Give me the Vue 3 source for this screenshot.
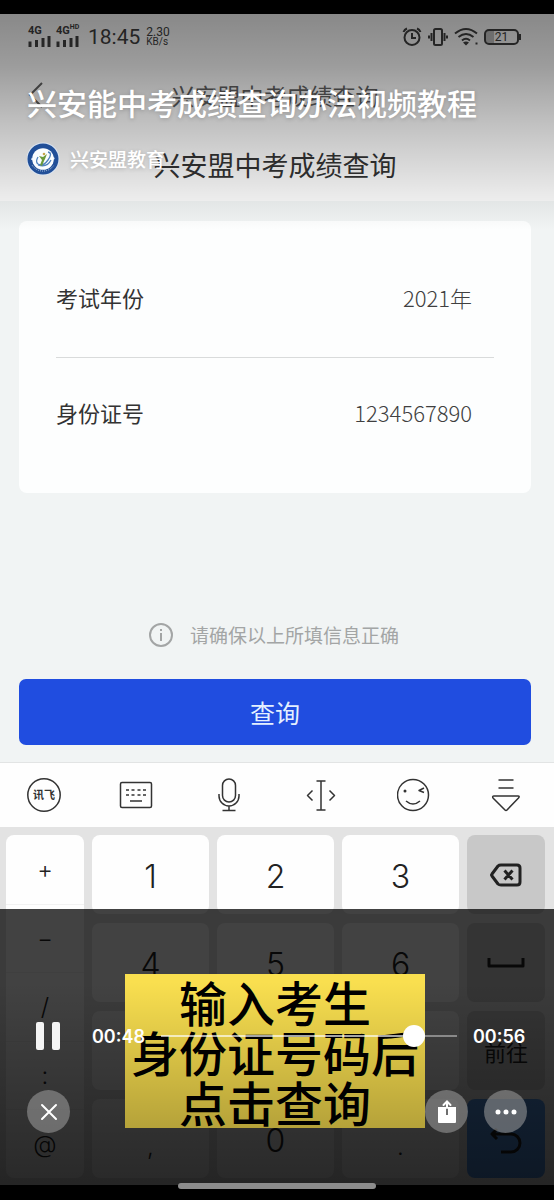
<script setup>
import { ref } from "vue";

const examYear = ref("2021年");
const idNumber = ref("1234567890");
const position = ref(49.5);

const symbols = ["+", "−", "/", ":", "@"];

// the middle of the third row stays blank behind the caption
const keys = [
  { label: "1" },
  { label: "2" },
  { label: "3" },
  { icon: "delete" },
  { label: "4" },
  { label: "5" },
  { label: "6" },
  { icon: "space" },
  { label: "" },
  { label: "" },
  { label: "" },
  { label: "前往", kind: "go" },
  { label: ",", kind: "mark" },
  { label: "0" },
  { label: ".", kind: "mark" },
  { icon: "enter" },
];

const captionLines = ["输入考生", "身份证号码后", "点击查询"];
</script>

<template>
  <main class="player">
    <section class="video">
      <div class="phone-head">
        <div class="status-bar">
          <div class="signal">
            <span>4G</span>
            <svg width="24" height="11" viewBox="0 0 24 11">
              <path d="M2 5.500V11M8.500 4V11M15 2V11M21 0V11" />
            </svg>
          </div>
          <div class="signal">
            <span>4G<sup>HD</sup></span>
            <svg width="24" height="11" viewBox="0 0 24 11">
              <path d="M2 5.500V11M8.500 4V11M15 2V11M21 0V11" />
            </svg>
          </div>
          <span class="clock">18:45</span>
          <span class="speed">2.30<small>KB/s</small></span>
          <div class="status-icons">
            <svg width="20" height="20" viewBox="0 0 20 20">
              <circle cx="10" cy="10.500" r="7.500" />
              <path d="M10 6v5h4M1.500 5Q2.500 2.500 5 1.500M18.500 5Q17.500 2.500 15 1.500" />
            </svg>
            <svg width="20" height="20" viewBox="0 0 20 20">
              <rect x="6" y="2" width="8" height="16" rx="1.500" />
              <path d="M3.500 6v8M1 8.500v3M16.500 6v8M19 8.500v3" />
            </svg>
            <svg width="24" height="20" viewBox="0 0 24 20">
              <path d="M1 6.500Q12-2.500 23 6.500M4.500 10Q12 4 19.500 10M8 13.500Q12 10 16 13.500" />
              <path class="solid" d="M9 15.500Q12 13.500 15 15.500L12 18.500ZM21.500 15.500h2v2h-2Z" />
            </svg>
            <span class="battery">21</span>
          </div>
        </div>

        <div class="nav-bar">
          <svg class="back" width="16" height="26" viewBox="0 0 16 26">
            <path d="M14 1L2 13L14 25" />
          </svg>
          <span>兴安盟中考成绩查询</span>
        </div>
        <h2>兴安盟中考成绩查询</h2>
      </div>

      <form class="query" @submit.prevent>
        <div class="card">
          <div class="field">
            <label for="exam-year">考试年份</label>
            <input id="exam-year" v-model="examYear" type="text" />
          </div>
          <div class="field">
            <label for="id-number">身份证号</label>
            <input id="id-number" v-model="idNumber" type="text" />
          </div>
        </div>

        <p class="notice">
          <svg width="24" height="24" viewBox="0 0 24 24">
            <circle cx="12" cy="12" r="11" />
            <path d="M12 10v8M12 6v2" />
          </svg>
          请确保以上所填信息正确
        </p>
        <button class="submit" type="submit">查询</button>
      </form>

      <div class="toolbar">
        <svg viewBox="0 0 34 34">
          <circle cx="17" cy="17" r="16.200" />
          <text x="17" y="21" text-anchor="middle">讯飞</text>
        </svg>
        <svg viewBox="0 0 34 34">
          <rect x="1.500" y="4.500" width="31" height="25" rx="1.500" />
          <path d="M7 12h3M12.500 12h3M18.500 12h3M24 12h3M7 17h3M12.500 17h3M18.500 17h3M24 17h3M11 23h12" />
        </svg>
        <svg viewBox="0 0 34 34">
          <rect x="10.500" y="1" width="13" height="23" rx="6.500" />
          <path d="M7 16v2a10 10 0 0 0 20 0v-2M17 28v5M10.500 32.500h13" />
        </svg>
        <svg viewBox="0 0 34 34">
          <path d="M12.500 3h9M17 3v29M12.500 32h9M8.500 12.500l-5 5l5 5M25.500 12.500l5 5l-5 5" />
        </svg>
        <svg viewBox="0 0 34 34">
          <circle cx="16" cy="17" r="15.500" />
          <path d="M9 23Q16 29 23 23M27 10l-5 2.500l5 2" />
          <circle class="eye" cx="8" cy="13" r="1.500" />
        </svg>
        <svg viewBox="0 0 34 34">
          <path d="M9.500 2h15M9.500 10h15M5 18h24q2 0 .5 2L18 32q-1 1-2 0L4 20q-1-2 1-2Z" />
        </svg>
      </div>

      <div class="keypad">
        <div class="keys">
          <div class="symbols">
            <button v-for="symbol in symbols" :key="symbol" type="button">{{ symbol }}</button>
          </div>
          <button
            v-for="(key, index) in keys"
            :key="index"
            class="key"
            :class="[key.kind, key.icon]"
            type="button"
            :aria-label="key.icon"
          >
            <svg v-if="key.icon === 'delete'" width="32" height="24" viewBox="0 0 32 24">
              <path d="M11 2H27q3 0 3 3V19q0 3-3 3H11q-2 0-3-1L2 13q-1-1 0-2L8 3q1-1 3-1ZM14.500 7.500l8 9M22.500 7.500l-8 9" />
            </svg>
            <svg v-else-if="key.icon === 'space'" width="38" height="12" viewBox="0 0 38 12">
              <path d="M2 1v8h34V1" />
            </svg>
            <svg v-else-if="key.icon === 'enter'" width="34" height="28" viewBox="0 0 34 28">
              <path d="M8 2L3 7l5 5M3 7H22a9 9 0 0 1 0 18H12" />
            </svg>
            <template v-else>{{ key.label }}</template>
          </button>
        </div>
        <div class="dim"></div>
        <p class="caption">
          <span v-for="line in captionLines" :key="line">{{ line }}</span>
        </p>
      </div>
    </section>

    <header class="top-overlay">
      <h1>兴安能中考成绩查询办法视频教程</h1>
      <div class="author">
        <svg width="34" height="34" viewBox="0 0 34 34">
          <circle cx="16" cy="17" r="16.500" fill="#dbe5f2" />
          <circle cx="16" cy="17" r="15.500" fill="#214f98" />
          <path d="M5 18A11.500 13 0 0 1 27 18" fill="none" stroke="#dce8f6" stroke-width="2" stroke-dasharray="2 2" />
          <path d="M5 23A13 13 0 0 0 27 23" fill="none" stroke="#b9cce5" stroke-width="1" stroke-dasharray="1 1" />
          <circle cx="16" cy="17" r="10.800" fill="#fafdff" />
          <path d="M21 10Q26 11 21 18T11 22Q8 20 11 15M11 23Q20 26 24 18" fill="none" stroke="#5082bd" stroke-width="1.300" />
          <path d="M12 14l4 1l4-3l-2 5l-1 2l-2 5l-2-1l2-5Z" fill="#6b9a3b" />
          <circle cx="17" cy="12" r="1.300" fill="#c7a44b" />
        </svg>
        <span>兴安盟教育</span>
      </div>
    </header>

    <footer class="bottom-overlay">
      <div class="progress">
        <button class="pause" type="button" aria-label="pause"></button>
        <span class="time">00:48</span>
        <input v-model="position" type="range" min="0" max="56" step="0.1" aria-label="progress" />
        <span class="time">00:56</span>
      </div>
      <div class="actions">
        <button class="round" type="button" aria-label="close">
          <svg width="20" height="20" viewBox="0 0 20 20">
            <path d="M3 3l14 14M17 3L3 17" />
          </svg>
        </button>
        <button class="round share" type="button" aria-label="share">
          <svg width="20" height="24" viewBox="0 0 20 24">
            <path class="fill" d="M1 7H9V15H11V7H19V22q0 1-1 1H2q-1 0-1-1Z" />
            <path d="M10 8V2M6.500 5L10 1.500L13.500 5" />
          </svg>
        </button>
        <button class="round" type="button" aria-label="more">
          <svg width="22" height="6" viewBox="0 0 22 6">
            <path class="fill" d="M.5 3a2.500 2.500 0 1 0 5 0a2.500 2.500 0 1 0-5 0M8.500 3a2.500 2.500 0 1 0 5 0a2.500 2.500 0 1 0-5 0M16.500 3a2.500 2.500 0 1 0 5 0a2.500 2.500 0 1 0-5 0" />
          </svg>
        </button>
      </div>
    </footer>
    <div class="home-indicator"></div>
  </main>
</template>

<style>
body {
  margin: 0;
  background: #000000;
}
</style>

<style scoped>
* {
  box-sizing: border-box;
}

.player {
  position: relative;
  padding: 14px 0 15px;
  background: #000000;
  color: #333333;
  font-family: "Noto Sans CJK SC", sans-serif;
}

h1,
h2,
p {
  margin: 0;
}

button {
  padding: 0;
  border: none;
  background: none;
  color: inherit;
  font: inherit;
}

svg {
  display: block;
  flex: none;
  fill: none;
  stroke: currentColor;
}

.video {
  background: #f1f4f4;
}

.phone-head {
  background: #fcfcfc;
}

.status-bar {
  display: flex;
  align-items: center;
  height: 45px;
  padding: 0 35px 0 28px;
  color: #404040;
  font-family: Roboto, sans-serif;
}

.signal {
  width: 28px;
  font-size: 11px;
  font-weight: 700;
  line-height: 10px;
  white-space: nowrap;
}

.signal sup {
  font-size: 7px;
  line-height: 0;
}

.signal svg {
  stroke-width: 3;
}

.clock {
  margin-left: 4px;
  font-size: 21px;
}

.speed {
  margin-left: 6px;
  font-size: 12px;
  line-height: 10px;
}

.speed small {
  display: block;
  font-size: 10px;
}

.status-icons {
  display: flex;
  align-items: center;
  gap: 6px;
  margin-left: auto;
}

.status-icons svg {
  stroke-width: 2;
}

.solid {
  fill: currentColor;
  stroke: none;
}

.battery {
  position: relative;
  width: 35px;
  border: 2px solid #404040;
  border-radius: 5px;
  background: linear-gradient(90deg, #c0c0c0 8px, transparent 8px);
  font-size: 12px;
  line-height: 12px;
  text-align: center;
}

.battery::after {
  content: "";
  position: absolute;
  top: 3px;
  right: -4px;
  width: 2px;
  height: 6px;
  background: #404040;
}

.nav-bar {
  display: grid;
  grid-template-columns: 1fr auto 1fr;
  align-items: center;
  height: 72px;
  padding: 0 32px 0 28px;
  color: #606060;
  font-size: 23px;
}

.back {
  stroke-width: 2;
}

h2 {
  padding: 16px 4px 18px 0;
  font-size: 27px;
  font-weight: 400;
  line-height: 36px;
  text-align: center;
}

.query {
  display: grid;
  padding: 20px 23px 17px 19px;
}

.card {
  min-height: 272px;
  padding: 21px 37px;
  border-radius: 8px;
  background: #fdfefe;
}

.field {
  display: flex;
  align-items: center;
  justify-content: space-between;
  height: 115px;
  padding: 0 22px 6px 0;
  font-size: 22px;
}

.field + .field {
  border-top: 1px solid #d9dbdb;
}

.field input {
  width: 200px;
  padding: 0;
  border: none;
  outline: none;
  background: none;
  color: #404040;
  font: inherit;
  font-weight: 300;
  text-align: right;
}

.notice {
  display: flex;
  align-items: center;
  justify-content: center;
  gap: 17px;
  margin-top: 128px;
  padding-right: 2px;
  color: #a3a5a5;
  font-size: 19px;
  line-height: 28px;
}

.notice svg {
  stroke-width: 2;
}

.submit {
  height: 66px;
  margin-top: 30px;
  border-radius: 7px;
  background: #204de0;
  color: #e4f0ff;
  font-size: 25px;
}

.toolbar {
  display: flex;
  align-items: center;
  justify-content: space-between;
  height: 65px;
  padding: 0 31px 0 27px;
  border-top: 1px solid #e2e4e4;
  background: #fefefe;
}

.toolbar svg {
  width: 34px;
  height: 34px;
  stroke-width: 1.5;
  stroke-linejoin: round;
}

.toolbar text {
  fill: #333333;
  stroke: none;
  font-size: 11px;
  font-weight: 700;
}

.toolbar .eye {
  fill: currentColor;
  stroke: none;
}

.keypad {
  position: relative;
  padding: 8px 9px 7px 6px;
  background: #e3e3e3;
  color: #222222;
}

.keys {
  display: grid;
  grid-template-columns: 2fr 3fr 3fr 3fr 2fr;
  grid-auto-rows: 79px;
  gap: 9px 8px;
}

.symbols {
  grid-row: span 4;
  display: grid;
  grid-template-rows: repeat(5, 1fr);
  border-radius: 8px;
  background: #fefefe;
  font-family: Inter, sans-serif;
  font-size: 24px;
  font-weight: 300;
}

.symbols button + button {
  border-top: 1px solid #f2f2f2;
}

.key {
  display: flex;
  align-items: center;
  justify-content: center;
  padding-top: 4px;
  border-radius: 8px;
  background: #fefefe;
  font-family: Inter, "Noto Sans CJK SC", sans-serif;
  font-size: 32px;
  font-weight: 300;
}

.key svg {
  stroke-width: 3;
  stroke-linejoin: round;
}

.key.mark {
  padding-top: 16px;
  font-size: 24px;
}

.key.delete,
.key.space,
.key.go {
  padding-top: 0;
  background: #c8c8c8;
}

.key.go {
  font-size: 22px;
  font-weight: 400;
}

.key.enter {
  background: #5494e4;
}

.dim {
  position: absolute;
  inset: 82px 0 0;
  background: rgba(0, 0, 0, 0.74);
}

.caption {
  position: absolute;
  top: 147px;
  left: 0;
  right: 4px;
  width: 300px;
  margin: 0 auto;
  padding: 2px 0;
  background: #f9df4f;
  color: #000000;
  font-size: 48px;
  font-weight: 500;
  line-height: 50px;
  text-align: center;
}

.caption span {
  display: block;
}

.top-overlay {
  position: absolute;
  top: 14px;
  left: 0;
  right: 0;
  height: 216px;
  padding: 66px 27px 0;
  background: linear-gradient(
    rgba(0, 0, 0, 0.46),
    rgba(0, 0, 0, 0.38) 24%,
    rgba(0, 0, 0, 0.24) 50%,
    rgba(0, 0, 0, 0.07) 84%,
    rgba(0, 0, 0, 0)
  );
  color: #ffffff;
}

h1 {
  font-size: 30px;
  font-weight: 500;
  line-height: 44px;
  text-shadow: 0 1px 4px rgba(0, 0, 0, 0.2);
}

.author {
  display: flex;
  align-items: center;
  gap: 9px;
  margin-top: 18px;
  font-size: 19px;
  font-weight: 500;
  line-height: 34px;
  text-shadow: 0 1px 4px rgba(0, 0, 0, 0.2);
}

.author svg {
  stroke: none;
}

.bottom-overlay {
  position: absolute;
  bottom: 15px;
  left: 0;
  right: 0;
  padding: 40px 27px 52px;
  background: linear-gradient(rgba(0, 0, 0, 0), rgba(0, 0, 0, 0.38));
  color: #ffffff;
}

.progress {
  display: flex;
  align-items: center;
  height: 28px;
  padding-left: 9px;
}

.pause {
  display: flex;
  justify-content: space-between;
  width: 24px;
  height: 28px;
}

.pause::before,
.pause::after {
  content: "";
  width: 8px;
  height: 28px;
  border-radius: 2px;
  background: #f4f4f4;
}

.time {
  width: 54px;
  font-family: Inter, sans-serif;
  font-size: 18px;
  font-weight: 600;
  white-space: nowrap;
}

.pause + .time {
  margin-left: 32px;
}

.progress input {
  flex: 1;
  min-width: 0;
  height: 22px;
  margin: 0 16px 0 15px;
  appearance: none;
  background: linear-gradient(90deg, rgba(255, 255, 255, 0.65) 86%, rgba(255, 255, 255, 0.4) 86%)
    center / 100% 2px no-repeat;
}

.progress input::-webkit-slider-thumb {
  appearance: none;
  width: 22px;
  height: 22px;
  border-radius: 50%;
  background: #ffffff;
}

.actions {
  display: flex;
  gap: 16px;
  margin-top: 40px;
}

.round {
  display: grid;
  place-items: center;
  width: 43px;
  height: 43px;
  border-radius: 50%;
  background: rgba(160, 160, 160, 0.55);
}

.round svg {
  stroke-width: 2;
  stroke-linecap: round;
}

.round .fill {
  fill: currentColor;
  stroke: none;
}

.share {
  margin-left: auto;
}

.home-indicator {
  position: absolute;
  bottom: 11px;
  left: 0;
  right: 0;
  width: 198px;
  height: 6px;
  margin: 0 auto;
  border-radius: 3px;
  background: #8c8c8c;
}
</style>
